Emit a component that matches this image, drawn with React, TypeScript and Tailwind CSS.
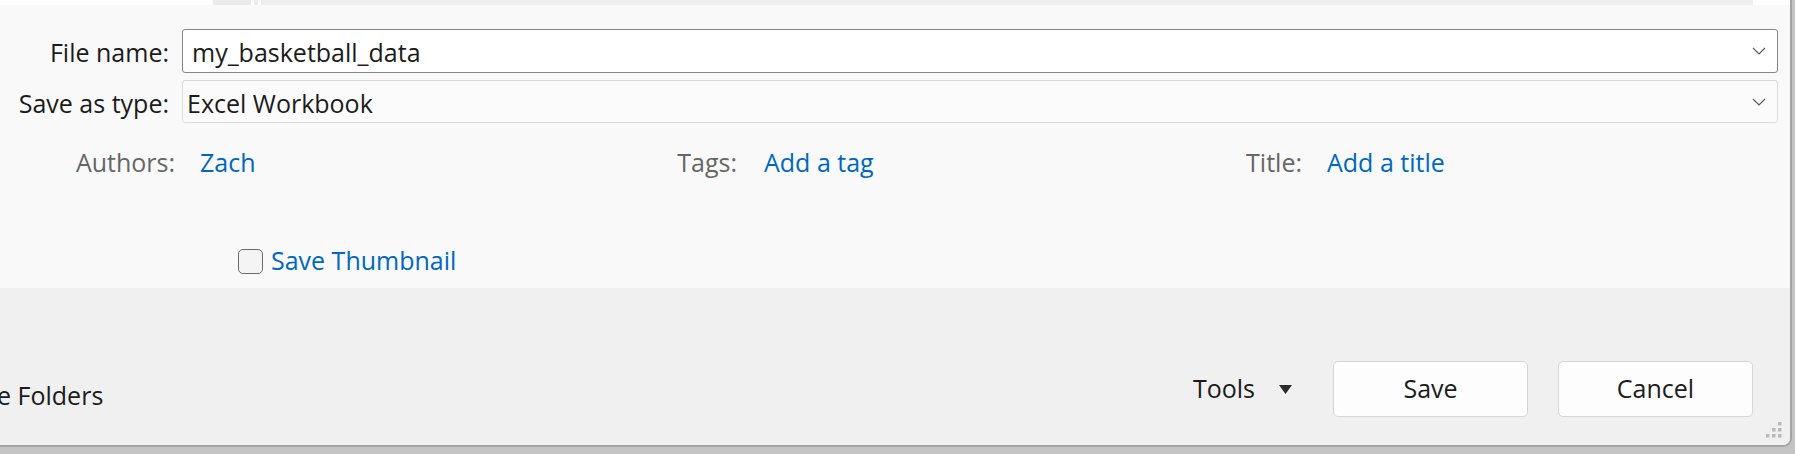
import React from 'react';

const font = "font-['Open_Sans',sans-serif]";

function Chevron() {
  return (
    <svg width="14" height="8" viewBox="0 0 14 8" className="text-[#5c5c5c]">
      <path d="M1 1 L7 7 L13 1" fill="none" stroke="currentColor" strokeWidth="1.2" />
    </svg>
  );
}

function Grip() {
  const dots = [
    [12, 0],
    [6, 6], [12, 6],
    [0, 12], [6, 12], [12, 12],
  ];
  return (
    <svg width="16" height="16" viewBox="0 0 16 16" className="absolute right-[8px] bottom-[7px]">
      {dots.map(([x, y], i) => (
        <rect key={i} x={x} y={y} width="3.5" height="3.5" fill="#b9b9b9" />
      ))}
    </svg>
  );
}

export default function App() {
  return (
    <div className={`w-[1795px] h-[454px] bg-[#c4c4c4] overflow-hidden ${font}`}>
      <div className="relative w-[1792px] h-[447px] flex flex-col border-r-[2px] border-b-[2px] border-[#a3a3a3] rounded-br-[9px] overflow-hidden bg-[#f0f0f0]">
        {/* top strip of the pane behind */}
        <div className="flex h-[5px] shrink-0">
          <div className="w-[213px] bg-white" />
          <div className="w-[38px] bg-[#ebebeb]" />
          <div className="w-[3px] bg-white" />
          <div className="w-[4px] bg-[#ececec]" />
          <div className="w-[3px] bg-white" />
          <div className="flex-1 bg-[#eeeeee]" />
          <div className="w-[37px] bg-white" />
        </div>

        {/* fields */}
        <div className="h-[283px] shrink-0 bg-[#f9f9f9] pt-[24px] text-[25px] text-[#1b1b1b]">
          <div className="flex items-center h-[44px]">
            <div className="w-[169px] pt-[2px] text-right leading-none">File name:</div>
            <div className="ml-[13px] w-[1596px] h-[44px] flex items-center justify-between bg-white border border-[#878787] rounded-[3px] pl-[9px] pr-[11px]">
              <span className="pt-[2px] leading-none">my_basketball_data</span>
              <Chevron />
            </div>
          </div>
          <div className="flex items-center h-[43px] mt-[7px]">
            <div className="w-[169px] pt-[3px] text-right leading-none">Save as type:</div>
            <div className="ml-[13px] w-[1596px] h-[43px] flex items-center justify-between bg-[#fbfbfb] border border-[#d9d9d9] rounded-[3px] pl-[4px] pr-[11px]">
              <span className="pt-[3px] leading-none">Excel Workbook</span>
              <Chevron />
            </div>
          </div>

          <div className="flex items-center h-[30px] mt-[25px]">
            <div className="w-[175px] text-right text-[#666666]">Authors:</div>
            <div className="ml-[25px] w-[320px] text-[#0067c0]">Zach</div>
            <div className="w-[217px] text-right text-[#666666]">Tags:</div>
            <div className="ml-[27px] w-[263px] text-[#0067c0]">Add a tag</div>
            <div className="w-[275px] text-right text-[#666666]">Title:</div>
            <div className="ml-[25px] text-[#0067c0]">Add a title</div>
          </div>

          <div className="flex items-center h-[26px] mt-[70px] pl-[238px]">
            <div className="w-[25px] h-[25px] rounded-[5px] border-[1.5px] border-[#6a6a6a] bg-[#f4f4f4]" />
            <span className="ml-[8px] text-[#0067c0]">Save Thumbnail</span>
          </div>
        </div>

        {/* bottom bar */}
        <div className="flex-1 bg-[#f0f0f0] text-[25px] text-[#1b1b1b]">
          <div className="flex items-center h-[56px] mt-[73px] pr-[37px]">
            <span className="ml-[-43px] mt-[14px]">Hide Folders</span>
            <div className="ml-auto flex items-center">
              <span>Tools</span>
              <svg width="13" height="9" viewBox="0 0 13 9" className="ml-[24px]">
                <path d="M0 0 H13 L6.5 9 Z" fill="#2b2b2b" />
              </svg>
            </div>
            <button className="ml-[41px] w-[195px] h-[56px] bg-[#fdfdfd] border border-[#d6d6d6] rounded-[5px] text-[25px]">Save</button>
            <button className="ml-[30px] w-[195px] h-[56px] bg-[#fdfdfd] border border-[#d6d6d6] rounded-[5px] text-[25px]">Cancel</button>
          </div>
        </div>
        <Grip />
      </div>
    </div>
  );
}
